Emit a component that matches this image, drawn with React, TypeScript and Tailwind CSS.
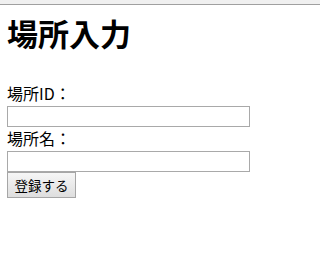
export default function App() {
  return (
    <div className="min-h-[277px] bg-white font-['Noto_Sans_CJK_JP','Noto_Sans',sans-serif] text-black">
      <div className="h-[5px] bg-[#f0f0f0] border-b border-[#a0a0a0]" />
      <div className="px-[7px]">
        <h1 className="mt-[8px] h-[40px] text-[31px] leading-[40px] font-bold">場所入力</h1>
        <form className="mt-[30px] flex flex-col items-start" onSubmit={(e) => e.preventDefault()}>
          <label htmlFor="placeId" className="h-[20px] text-[16px] leading-[20px]">場所ID：</label>
          <input
            id="placeId"
            type="text"
            className="mt-[3px] h-[21px] w-[243px] border border-[#a9a9a9] bg-white px-1 text-[13px] outline-none"
          />
          <label htmlFor="placeName" className="mt-[1px] h-[20px] text-[16px] leading-[20px]">場所名：</label>
          <input
            id="placeName"
            type="text"
            className="mt-[3px] h-[21px] w-[243px] border border-[#a9a9a9] bg-white px-1 text-[13px] outline-none"
          />
          <button
            type="submit"
            className="h-[26px] w-[69px] border border-[#a6a6a6] bg-gradient-to-b from-[#f6f6f6] to-[#dedede] text-[13.5px] leading-[24px]"
          >
            登録する
          </button>
        </form>
      </div>
    </div>
  );
}
